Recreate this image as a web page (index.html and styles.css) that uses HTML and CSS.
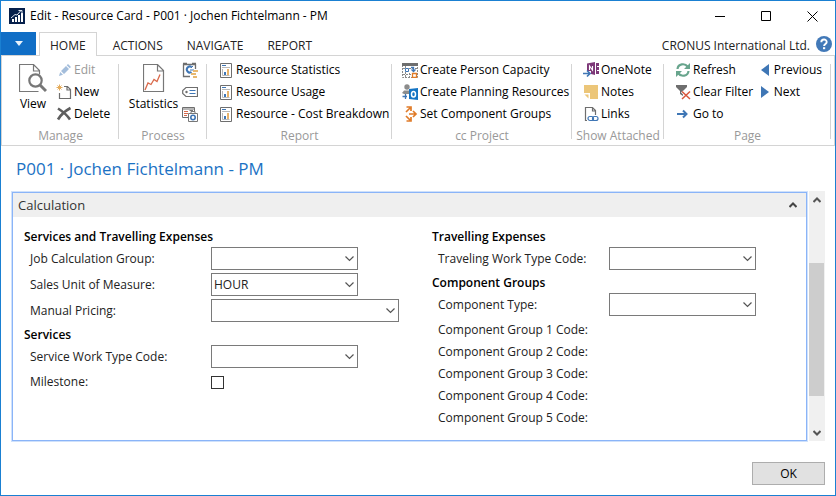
FILE: index.html
```html
<!DOCTYPE html>
<html lang="en">
<head>
<meta charset="utf-8">
<title>Edit - Resource Card - P001 · Jochen Fichtelmann - PM</title>
<link rel="stylesheet" href="styles.css">
</head>
<body>
<svg class="defs" aria-hidden="true">
  <symbol id="report" viewBox="0 0 12 15">
    <path d="M.5.5h11v14H.5z" fill="#fff" stroke="#6e6e6e"/>
    <path d="M2 2.5h4" stroke="#3f76b5"/><path d="M2 4.5h8M2.5 6v6.5h7" stroke="#b9b9b9" fill="none"/>
    <path d="M4 9h2v3H4z" fill="#3f76b5"/><path d="M7 6h2v6H7z" fill="#e8b36a"/>
  </symbol>
  <symbol id="chevron" viewBox="0 0 9 6"><path d="M.5.5l4 4 4-4" fill="none" stroke="#555" stroke-width="1.2"/></symbol>
</svg>
<div class="window">
  <header class="titlebar">
    <svg class="app-icon" width="16" height="16" viewBox="0 0 16 16"><path d="M0 0h16v16H0z" fill="#06204c"/><path d="M3 11h2v3H3zM6 9h2v5H6zM9 7h2v7H9zM12 5h2v9h-2z" fill="#fff"/><path d="M2 10l4-3.5 2 .5 4-4.500M9.5 2.5H13V6" fill="none" stroke="#dfe6f2"/></svg>
    <h1 class="window-title">Edit - Resource Card - P001 · Jochen Fichtelmann - PM</h1>
    <div class="window-controls">
      <button aria-label="Minimize"><svg width="11" height="11"><path d="M0 5.5h10" stroke="#000"/></svg></button>
      <button aria-label="Maximize"><svg width="11" height="11"><path d="M.5.5h9v9h-9z" fill="none" stroke="#000"/></svg></button>
      <button aria-label="Close"><svg width="11" height="11"><path d="M.5.5l10 10M10.5.5l-10 10" stroke="#000"/></svg></button>
    </div>
  </header>

  <nav class="tabs">
    <button class="file-menu" aria-label="Application menu"><svg width="8" height="5"><path d="M0 0h8L4 5z" fill="#e8f2fb"/></svg></button>
    <a class="tab active" href="#home">HOME</a>
    <a class="tab" href="#actions">ACTIONS</a>
    <a class="tab" href="#navigate">NAVIGATE</a>
    <a class="tab" href="#report-tab">REPORT</a>
    <span class="company">CRONUS International Ltd.</span>
    <button class="help" aria-label="Help"><svg width="16" height="16" viewBox="0 0 16 16"><circle cx="8" cy="8" r="8" fill="#4279b8"/><path d="M5.3 6.200C5.3 2.6 10.7 2.7 10.7 6c0 2-2.6 2-2.6 4" fill="none" stroke="#fff" stroke-width="1.9"/><path d="M7 11.2h2.2v2H7z" fill="#fff"/></svg></button>
  </nav>

  <div class="ribbon" id="home">
    <section class="group manage">
      <div class="items">
        <button class="big"><svg width="28" height="30" viewBox="0 0 28 30"><path d="M19.5 27.5H.5V.5h14l6 6v4M14.5.5v6.5h6" fill="none" stroke="#777" stroke-width="1.2"/><circle cx="16.5" cy="16.5" r="6.2" fill="#fff" stroke="#777" stroke-width="2.2"/><path d="M21 21l6 6" stroke="#777" stroke-width="3"/></svg>View</button>
        <div class="list">
          <button disabled><svg width="16" height="16" viewBox="0 0 16 16"><path d="M3 14l1.2-4L7 12.8zM5 9l5-5 3 3-5 5zM10.7 3.3L12 2l3 3-1.3 1.3z" fill="#a3bddb"/></svg>Edit</button>
          <button><svg width="16" height="16" viewBox="0 0 16 16"><path d="M8 2.5h3.5l3 3v9h-11V9M11 2.5V6h3.5" fill="none" stroke="#6e6e6e" stroke-width="1.2"/><path d="M3.5.5v6M.5 3.5h6M1.5 1.5l4 4M5.5 1.5l-4 4" stroke="#e5ac5c"/></svg>New</button>
          <button><svg width="16" height="16" viewBox="0 0 16 16"><path d="M2 2.5C6 5 11 9 14 13.5M14.5 2C9 5 4.5 9 2 13.5" fill="none" stroke="#5f5f5f" stroke-width="2.6"/></svg>Delete</button>
        </div>
      </div>
      <h2>Manage</h2>
    </section>
    <section class="group process">
      <div class="items">
        <button class="big"><svg width="22" height="30" viewBox="0 0 22 30"><path d="M.5.5h14l6 6v21H.5zM14.5.5v6.5h6" fill="none" stroke="#777" stroke-width="1.2"/><path d="M2 26l3-7 3 1.5 3-5 3 2 3-7" fill="none" stroke="#d9694a" stroke-width="1.3"/></svg>Statistics</button>
        <div class="list">
          <button aria-label="Ledger entries"><svg width="16" height="16" viewBox="0 0 16 16"><path d="M8 14.5H1.5v-12h12V7M1 1.5h4M10 1.5h4" fill="none" stroke="#6e6e6e" stroke-width="1.3"/><path d="M9.5 5a3 3 0 1 0 0 5" fill="none" stroke="#3f76b5" stroke-width="2"/><path d="M8 8h4M9 6l2-2" stroke="#3f76b5"/><path d="M11 8h5v2h-5zM9 11h5v2H9zM11 14h4v2h-4z" fill="#e8b970"/></svg></button>
          <button aria-label="Dimensions"><svg width="16" height="16" viewBox="0 0 16 16"><path d="M4 3.5h11.5v9H4L.7 9.5v-3z" fill="none" stroke="#6e6e6e" stroke-width="1.2"/><circle cx="4.5" cy="8" r="1.2" fill="#6e6e6e"/><path d="M7.5 6.5h6M7.5 9.5h6" stroke="#3f76b5"/></svg></button>
          <button aria-label="Units of measure"><svg width="16" height="16" viewBox="0 0 16 16"><path d="M6 11.5H.5V1.5h12V5M.5 3h12" fill="none" stroke="#6e6e6e"/><path d="M2 5.5h4M2 7.5h4M2 9.5h3" stroke="#d9694a"/><path d="M7.5 4.5H11" stroke="#777"/><path d="M6.5 7.5h9v8h-9zM9 7V5.5h4V7" fill="#fff" stroke="#777"/><circle cx="11" cy="11.5" r="2.2" fill="none" stroke="#3f76b5" stroke-width="1.6"/></svg></button>
        </div>
      </div>
      <h2>Process</h2>
    </section>
    <section class="group report">
      <div class="items">
        <div class="list">
          <button><svg width="12" height="15"><use href="#report"/></svg>Resource Statistics</button>
          <button><svg width="12" height="15"><use href="#report"/></svg>Resource Usage</button>
          <button><svg width="12" height="15"><use href="#report"/></svg>Resource - Cost Breakdown</button>
        </div>
      </div>
      <h2>Report</h2>
    </section>
    <section class="group project">
      <div class="items">
        <div class="list">
          <button><svg width="16" height="16" viewBox="0 0 16 16"><path d="M.5 3v12.5h15V3M1 6.5h14M1 12.5h9M3.5 4v11M7.5 11v4" fill="none" stroke="#8a8a8a" stroke-dasharray="2 1"/><path d="M0 1h16v3H0z" fill="#6e6e6e"/><path d="M3.5 6.5h3v3h-3z" fill="#fff" stroke="#3f76b5"/><path d="M9 5.5h2.5V9M9.5 7.5l2 2 2-2" fill="none" stroke="#3f76b5" stroke-width="1.3"/><path d="M10.5 11.5h4v4h-4z" fill="#fff" stroke="#e07b28" stroke-width="1.3"/></svg>Create Person Capacity</button>
          <button><svg width="16" height="16" viewBox="0 0 16 16"><circle cx="5" cy="3" r="2.7" fill="#8c8c8c"/><path d="M0 9l2-2.500h5V10H2z" fill="#8c8c8c"/><path d="M.5 12.5H5M3.5 10v5" stroke="#3f76b5" stroke-width="1.3"/><path d="M7 5l9-1v12l-9-1z" fill="#1474c4"/><ellipse cx="11.5" cy="10.2" rx="2" ry="2.8" fill="none" stroke="#fff" stroke-width="1.5"/></svg>Create Planning Resources</button>
          <button><svg width="16" height="16" viewBox="0 0 16 16"><path d="M4 6l4-4M4.500 1H9v4M4 10l4 4M4.500 15H9v-4M7 8h7M11 5l3 3-3 3" fill="none" stroke="#e07b28" stroke-width="1.7"/></svg>Set Component Groups</button>
        </div>
      </div>
      <h2>cc Project</h2>
    </section>
    <section class="group attached">
      <div class="items">
        <div class="list">
          <button><svg width="16" height="16" viewBox="0 0 16 16"><path d="M4 1.5L12 0v13L8 12V9H4zM13 1h3v11h-3z" fill="#7d3878"/><path d="M6.5 8V4l3 4V4" fill="none" stroke="#fff" stroke-width="1.1"/><path d="M14 4h2v1h-2zM14 8h2v1h-2z" fill="#fff"/><path d="M0 11.5h6M4 8.5l3 3-3 3" fill="none" stroke="#3f76b5" stroke-width="1.7"/></svg>OneNote</button>
          <button><svg width="16" height="16" viewBox="0 0 16 16"><path d="M1 1h14v14H7V9H1z" fill="#ecc679"/><path d="M1.5 10.5h4v4z" fill="#ecc679"/></svg>Notes</button>
          <button><svg width="16" height="16" viewBox="0 0 16 16"><path d="M4 14.5H2.5v-13h7l3 3V9M9.5 1.5v3.5h3" fill="none" stroke="#6e6e6e" stroke-width="1.2"/><rect x="5" y="10.5" width="5.5" height="4" rx="2" fill="none" stroke="#3f76b5" stroke-width="1.2"/><rect x="9.5" y="10.5" width="5.5" height="4" rx="2" fill="none" stroke="#3f76b5" stroke-width="1.2"/></svg>Links</button>
        </div>
      </div>
      <h2>Show Attached</h2>
    </section>
    <section class="group page">
      <div class="items">
        <div class="list">
          <button><svg width="16" height="16" viewBox="0 0 16 16"><path d="M2.5 7C3 1.5 10 1 12.5 4.5M13.5 9C13 14.5 6 15 3.5 11.5" fill="none" stroke="#68a58d" stroke-width="2.2"/><path d="M15 1v6H9zM1 15V9h6z" fill="#68a58d"/></svg>Refresh</button>
          <button><svg width="16" height="16" viewBox="0 0 16 16"><path d="M1 1h11v2L8 7v5L5 10V7L1 3z" fill="#6e6e6e"/><path d="M7 7.5l8 7.500M15 7.5L7 15" stroke="#fff" stroke-width="3"/><path d="M7 7.5l8 7.500M15 7.5L7 15" stroke="#d9573c" stroke-width="1.5"/></svg>Clear Filter</button>
          <button><svg width="16" height="16" viewBox="0 0 16 16"><path d="M2 8h9M8 4.5L11.5 8 8 11.5" fill="none" stroke="#3f76b5" stroke-width="2"/></svg>Go to</button>
        </div>
        <div class="list pager">
          <button><svg width="8" height="12"><path d="M8 0v12L0 6z" fill="#3f76b5"/></svg>Previous</button>
          <button><svg width="8" height="12"><path d="M0 0v12l8-6z" fill="#3f76b5"/></svg>Next</button>
        </div>
      </div>
      <h2>Page</h2>
    </section>
  </div>

  <h2 class="page-title">P001 · Jochen Fichtelmann - PM</h2>

  <main class="content">
    <form class="card" id="card">
      <button type="button" class="card-head">Calculation<svg width="8" height="6" viewBox="0 0 8 6"><path d="M.5 5L4 1.5 7.5 5" fill="none" stroke="#444" stroke-width="2"/></svg></button>
      <div class="columns">
        <div class="column">
          <h3>Services and Travelling Expenses</h3>
          <div class="field"><label for="jcg">Job Calculation Group:</label><span class="combo"><select id="jcg"><option></option></select><svg width="9" height="6"><use href="#chevron"/></svg></span></div>
          <div class="field"><label for="uom">Sales Unit of Measure:</label><span class="combo"><select id="uom"><option>HOUR</option></select><svg width="9" height="6"><use href="#chevron"/></svg></span></div>
          <div class="field"><label for="mp">Manual Pricing:</label><span class="combo wide"><select id="mp"><option></option></select><svg width="9" height="6"><use href="#chevron"/></svg></span></div>
          <h3>Services</h3>
          <div class="field"><label for="swt">Service Work Type Code:</label><span class="combo"><select id="swt"><option></option></select><svg width="9" height="6"><use href="#chevron"/></svg></span></div>
          <div class="field short"><label for="ms">Milestone:</label><input type="checkbox" id="ms"></div>
        </div>
        <div class="column right">
          <h3>Travelling Expenses</h3>
          <div class="field"><label for="twt">Traveling Work Type Code:</label><span class="combo"><select id="twt"><option></option></select><svg width="9" height="6"><use href="#chevron"/></svg></span></div>
          <h3>Component Groups</h3>
          <div class="field"><label for="ct">Component Type:</label><span class="combo"><select id="ct"><option></option></select><svg width="9" height="6"><use href="#chevron"/></svg></span></div>
          <div class="field short"><span class="caption">Component Group 1 Code:</span></div>
          <div class="field short"><span class="caption">Component Group 2 Code:</span></div>
          <div class="field short"><span class="caption">Component Group 3 Code:</span></div>
          <div class="field short"><span class="caption">Component Group 4 Code:</span></div>
          <div class="field short"><span class="caption">Component Group 5 Code:</span></div>
        </div>
      </div>
    </form>
    <div class="scrollbar">
      <button aria-label="Scroll up"><svg width="8" height="6" viewBox="0 0 8 6"><path d="M.5 5L4 1.5 7.5 5" fill="none" stroke="#555" stroke-width="2"/></svg></button>
      <div class="track"><div class="thumb"></div></div>
      <button aria-label="Scroll down"><svg width="8" height="6" viewBox="0 0 8 6"><path d="M.5 1L4 4.5 7.5 1" fill="none" stroke="#555" stroke-width="2"/></svg></button>
    </div>
  </main>

  <footer class="footer"><button class="ok">OK</button></footer>
</div>
</body>
</html>
```
FILE: styles.css
```css
* { box-sizing: border-box; }

body {
  margin: 0;
  font: 12px/16px "Open Sans", "Noto Sans", sans-serif;
  color: #000;
  background: #fff;
}

h1, h2, h3 { margin: 0; font: inherit; }

button {
  margin: 0;
  padding: 0;
  border: 0;
  background: none;
  font: inherit;
  color: inherit;
  white-space: nowrap;
}

svg { display: block; flex: none; }
.defs { position: absolute; width: 0; height: 0; }

.window {
  display: flex;
  flex-direction: column;
  min-height: 100vh;
  border: 1px solid #1a80d2;
}

.titlebar { display: flex; align-items: center; height: 30px; padding-left: 8px; }
.window-title { flex: 1; margin-left: 5px; white-space: nowrap; }
.window-controls { display: flex; }
.window-controls button { display: flex; align-items: center; justify-content: center; width: 46px; height: 28px; }

.tabs { display: flex; height: 25px; padding-top: 1px; border-bottom: 1px solid #d4d4d4; }
.file-menu { display: flex; align-items: center; justify-content: center; width: 35px; height: 23px; margin-right: 3px; background: #106ec6; }
.tab { padding: 6px 12px 0; color: #222; text-decoration: none; }
.tab.active { height: 24px; margin-right: 4px; padding: 5px 10px 0; border: 1px solid #d4d4d4; border-bottom: 0; background: #fff; }
.company { margin-left: auto; padding-top: 6px; color: #222; }
.help { display: flex; align-items: center; width: 16px; margin: 0 3px 0 6px; }

.ribbon {
  display: grid;
  grid-template-columns: 117px 88px 185px 180px 92px 1fr;
  height: 90px;
  padding: 3px 3px 0 0;
  border: 1px solid #d4d4d4;
  border-top: 0;
}
.group { position: relative; display: flex; flex-direction: column; }
.group::after { content: ""; position: absolute; top: 5px; right: 0; bottom: 6px; border-right: 1px solid #d4d4d4; }
.group h2 { margin-top: 3px; color: #999; text-align: center; white-space: nowrap; }
.items { display: flex; height: 66px; }
.list button { display: flex; align-items: center; height: 22px; gap: 2px; }
.list button:disabled { color: #999; }
.big { display: flex; flex-direction: column; align-items: center; padding-top: 5px; gap: 2px; }
.manage .big { width: 54px; padding-left: 8px; }
.process .big { width: 63px; padding-left: 6px; }
.report .list { padding-left: 13px; }
.report .list button { gap: 4px; }
.project .list { padding-left: 10px; }
.attached .list { padding-left: 11px; }
.page .list { padding-left: 11px; }
.page .pager { margin-left: auto; padding: 0 9px 0 0; }
.pager button { gap: 5px; }

.page-title { padding: 10px 15px 0; font-size: 17px; line-height: 26px; color: #1b72c4; }

.content { display: flex; flex: 1; margin: 9px 10px 0; }
.card {
  flex: 1;
  margin: 1px 2px 0 1px;
  border: 1px solid #8ab4f8;
  box-shadow: 0 0 0 1px #cfe1fb;
}
.card-head {
  display: flex;
  align-items: center;
  justify-content: space-between;
  width: 100%;
  height: 24px;
  padding: 0 9px 0 5px;
  background: #efefef;
  font-size: 13px;
  color: #333;
}
.columns { display: grid; grid-template-columns: 408fr 374fr; padding: 10px 0 0 11px; color: #222; }
.column h3 { height: 20px; line-height: 20px; font-weight: 600; color: #000; }
.field { display: grid; grid-template-columns: 187px 1fr; align-items: center; height: 23px; margin-bottom: 3px; }
.right .field { grid-template-columns: 177px 1fr; }
.field.short { height: 22px; margin-bottom: 0; }
.field label, .caption { padding-left: 6px; white-space: nowrap; }
.combo { position: relative; display: block; width: 147px; height: 23px; }
.combo.wide { width: 188px; }
.combo select {
  width: 100%;
  height: 100%;
  padding: 0 20px 0 2px;
  border: 1px solid #7a7a7a;
  border-radius: 0;
  background: #fff;
  appearance: none;
  font: inherit;
  color: #222;
}
.combo svg { position: absolute; top: 9px; right: 4px; pointer-events: none; }
.field input { appearance: none; width: 13px; height: 13px; margin: 0; border: 1px solid #333; background: #fff; }

.scrollbar { display: flex; flex-direction: column; width: 16px; background: #f0f0f0; }
.scrollbar button { display: flex; align-items: center; justify-content: center; height: 17px; }
.track { display: flex; flex: 1; flex-direction: column; }
.track::before { content: ""; flex: 55; }
.track::after { content: ""; flex: 28; }
.thumb { flex: 134; margin-right: 1px; background: #cdcdcd; }

.footer { display: flex; justify-content: flex-end; padding: 21px 10px 10px; }
.ok { width: 73px; height: 23px; border: 1px solid #adadad; background: #e1e1e1; }
```
